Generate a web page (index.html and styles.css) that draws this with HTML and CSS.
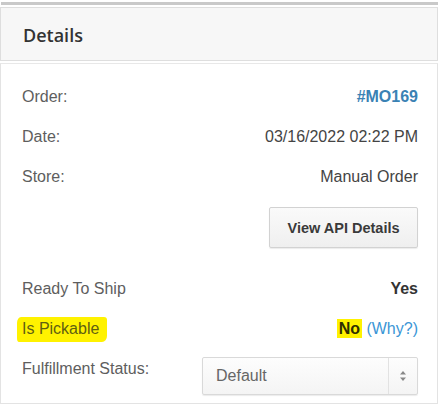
FILE: index.html
```html
<!DOCTYPE html>
<html>
<head>
<meta charset="utf-8">
<link rel="stylesheet" href="styles.css">
</head>
<body>
<div class="page">
  <div class="topbar"></div>
  <div class="panel-head"><h2 class="title">Details</h2></div>
  <div class="panel-body">
    <div class="row"><span class="label">Order:</span><a class="order-link">#MO169</a></div>
    <div class="row"><span class="label">Date:</span><span class="value">03/16/2022 02:22 PM</span></div>
    <div class="row"><span class="label">Store:</span><span class="value">Manual Order</span></div>
    <div class="btn-row"><button class="btn">View API Details</button></div>
    <div class="row row-ready"><span class="label">Ready To Ship</span><span class="value strong">Yes</span></div>
    <div class="row"><span class="label marker">Is Pickable</span><span class="value"><span class="strong hl">No</span> <a class="why">(Why?)</a></span></div>
    <div class="row row-select">
      <span class="label">Fulfillment Status:</span>
      <div class="select">
        <span class="select-text">Default</span>
        <span class="select-arrow">
          <svg width="8" height="12" viewBox="0 0 8 12"><path d="M4 1 L7 4.5 H1 Z" fill="#888"/><path d="M4 11 L7 7.5 H1 Z" fill="#888"/></svg>
        </span>
      </div>
    </div>
  </div>
</div>
</body>
</html>
```
FILE: styles.css
```css
* { box-sizing: border-box; }
html, body { margin: 0; padding: 0; background: #fff; }
body { font-family: "Liberation Sans", Arial, sans-serif; font-size: 16px; color: #555; }
.page { padding-top: 2px; width: 440px; }
.topbar { height: 3px; background: #c9c9c9; margin: 0 2px 0 1px; }
.panel-head {
  margin: 2px 2px 0 0;
  height: 54px;
  border: 1px solid #dedede;
  background: #f7f7f7;
  display: flex;
  align-items: center;
  padding-left: 22px;
}
.title {
  margin: 0;
  font-family: "Open Sans", sans-serif;
  font-weight: 600;
  font-size: 18px;
  color: #333;
  padding-top: 2px;
}
.panel-body {
  margin: 2px 2px 0 0;
  border: 1px solid #e3e3e3;
  border-top-color: #e8e8e8;
  padding: 13px 19px 8px 21px;
}
.row {
  height: 40px;
  display: flex;
  align-items: center;
  justify-content: space-between;
}
.label { color: #5e5e5e; line-height: 20px; }
.value { color: #444; }
.strong { font-weight: bold; color: #333; }
.order-link { font-weight: bold; color: #3a82b4; }
.why { color: #3b96d6; }
.btn-row { display: flex; justify-content: flex-end; margin-top: 10px; }
.btn {
  width: 149px;
  height: 41px;
  border: 1px solid #d2d2d2;
  border-radius: 2px;
  background: linear-gradient(#fafafa, #efefef);
  box-shadow: 0 1px 1px rgba(0,0,0,0.08);
  font-family: "Liberation Sans", Arial, sans-serif;
  font-weight: bold;
  font-size: 14.5px;
  color: #3a3a3a;
  padding: 0;
}
.row-ready { margin-top: 21px; }
.marker {
  background: #fff200;
  color: #5f5f12;
  margin-left: -5px;
  padding: 2px 8px 3px 5px;
  border-radius: 4px 3px 5px 2px / 6px 3px 6px 4px;
}
.hl { background: #fff200; color: #2f2f00; padding: 1px 2px; }
.row-select { height: auto; align-items: flex-start; margin-top: 8px; }
.row-select .label { padding-top: 2px; }
.select {
  width: 216px;
  height: 38px;
  border: 1px solid #d9d9d9;
  border-radius: 2px;
  background: linear-gradient(#fdfdfd, #f4f4f4);
  box-shadow: 0 1px 1px rgba(0,0,0,0.08);
  display: flex;
  align-items: stretch;
}
.select-text { flex: 1; display: flex; align-items: center; padding-left: 13px; color: #666; }
.select-arrow {
  width: 29px;
  border-left: 1px solid #e2e2e2;
  display: flex;
  align-items: center;
  justify-content: center;
}
```
